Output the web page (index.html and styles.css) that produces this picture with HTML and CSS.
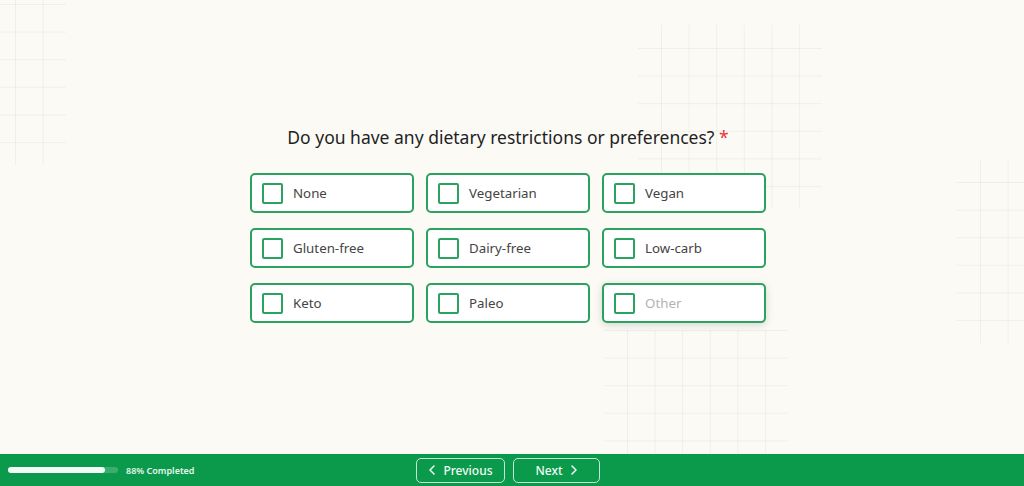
FILE: index.html
```html
<!DOCTYPE html>
<html lang="en">
<head>
  <meta charset="UTF-8">
  <meta name="viewport" content="width=device-width, initial-scale=1.0">
  <title>Survey</title>
  <link rel="stylesheet" href="styles.css">
</head>
<body>

  <!-- decorative grids in the background -->
  <div class="grid-deco deco-1"></div>
  <div class="grid-deco deco-2"></div>
  <div class="grid-deco deco-3"></div>
  <div class="grid-deco deco-4"></div>

  <div class="page">
    <main class="question">
      <h1 class="q-title">Do you have any dietary restrictions or preferences? <span class="req">*</span></h1>
      <ul class="choice-list">
        <li class="choice"><span class="box"></span><span class="choice-txt">None</span></li>
        <li class="choice"><span class="box"></span><span class="choice-txt">Vegetarian</span></li>
        <li class="choice"><span class="box"></span><span class="choice-txt">Vegan</span></li>
        <li class="choice"><span class="box"></span><span class="choice-txt">Gluten-free</span></li>
        <li class="choice"><span class="box"></span><span class="choice-txt">Dairy-free</span></li>
        <li class="choice"><span class="box"></span><span class="choice-txt">Low-carb</span></li>
        <li class="choice"><span class="box"></span><span class="choice-txt">Keto</span></li>
        <li class="choice"><span class="box"></span><span class="choice-txt">Paleo</span></li>
        <li class="choice other">
          <span class="box"></span>
          <input type="text" class="other-input" placeholder="Other">
        </li>
      </ul>
    </main>

    <footer class="bottom-bar">
      <div class="progress">
        <span class="progress-track"><span class="progress-fill" style="width: 88%"></span></span>
        <span class="progress-txt">88% Completed</span>
      </div>
      <div class="nav-btns">
        <button type="button" class="nav-btn">
          <svg width="8" height="10" viewBox="0 0 8 10"><path d="M6 1 2 5l4 4" fill="none" stroke="currentColor" stroke-width="1.5" stroke-linecap="round" stroke-linejoin="round"/></svg>
          Previous
        </button>
        <button type="button" class="nav-btn">
          Next
          <svg width="8" height="10" viewBox="0 0 8 10"><path d="M2 1l4 4-4 4" fill="none" stroke="currentColor" stroke-width="1.5" stroke-linecap="round" stroke-linejoin="round"/></svg>
        </button>
      </div>
    </footer>
  </div>

</body>
</html>
```

FILE: styles.css
```css
* {
  margin: 0;
  padding: 0;
  box-sizing: border-box;
}
ul, li {
  list-style-type: none;
}
button {
  cursor: pointer;
  border: 0;
  background: none;
  font-family: inherit;
}

body {
  width: 1024px;
  height: 486px;
  overflow: hidden;
  position: relative;
  background-color: #FBFAF5;
  font-family: "Noto Sans", "Open Sans", sans-serif;
  color: #222;
}

/* background grids */
.grid-deco {
  position: absolute;
  background-image:
    linear-gradient(to right, rgba(0,0,0,0.045) 1px, transparent 1px),
    linear-gradient(to bottom, rgba(0,0,0,0.045) 1px, transparent 1px);
  background-size: 27.6px 27.6px;
}
.deco-1 { left: 0;     top: 0;     width: 66px;  height: 165px; background-position: 15px 4px; }
.deco-2 { left: 638px; top: 25px;  width: 184px; height: 184px; background-position: 23px 23px; }
.deco-3 { left: 956px; top: 160px; width: 68px;  height: 183px; background-position: 24px 22px; }
.deco-4 { left: 604px; top: 330px; width: 184px; height: 124px; background-position: 23px 0; }

.page {
  position: relative;
  height: 100%;
  display: flex;
  flex-direction: column;
}

.question {
  flex: 1;
  display: flex;
  flex-direction: column;
  align-items: center;
  padding-top: 124px;
  padding-right: 8px;
}
.q-title {
  font-size: 17.5px;
  font-weight: 400;
  line-height: 26px;
  color: #1f1f1f;
}
.req {
  color: #e53935;
}

.choice-list {
  margin-top: 23px;
  display: grid;
  grid-template-columns: repeat(3, 164px);
  column-gap: 12px;
  row-gap: 15px;
}
.choice {
  height: 40px;
  display: flex;
  align-items: center;
  padding-left: 10px;
  background-color: #fff;
  border: 2px solid #2BA25F;
  border-radius: 5px;
}
.box {
  flex: none;
  width: 21px;
  height: 21px;
  border: 2px solid #2BA25F;
  border-radius: 2px;
  background-color: #fff;
}
.choice-txt {
  margin-left: 10px;
  font-size: 13.3px;
  color: #444;
}
.choice.other {
  box-shadow: 0 2px 8px rgba(0,0,0,0.15);
}
.other-input {
  margin-left: 10px;
  width: 110px;
  border: 0;
  outline: 0;
  font-family: inherit;
  font-size: 13.3px;
  color: #444;
  background: none;
}
.other-input::placeholder {
  color: #b3b3b3;
}

/* bottom bar */
.bottom-bar {
  height: 32px;
  background-color: #0B9A4B;
  display: flex;
  align-items: center;
  position: relative;
}
.progress {
  position: absolute;
  left: 8px;
  top: 0;
  height: 32px;
  display: flex;
  align-items: center;
}
.progress-track {
  display: block;
  width: 110px;
  height: 6px;
  border-radius: 3px;
  background-color: rgba(255,255,255,0.2);
}
.progress-fill {
  display: block;
  height: 100%;
  border-radius: 3px;
  background-color: #F2FBF6;
}
.progress-txt {
  margin-left: 8px;
  font-size: 9px;
  font-weight: 600;
  color: #E6F7EC;
}

.nav-btns {
  flex: 1;
  display: flex;
  justify-content: center;
  gap: 8px;
  padding-right: 8px;
}
.nav-btn {
  height: 25px;
  display: flex;
  align-items: center;
  justify-content: center;
  gap: 7px;
  border: 1px solid rgba(255,255,255,0.75);
  border-radius: 5px;
  color: #F2FBF6;
  font-size: 12px;
  font-weight: 500;
}
.nav-btn:first-child {
  width: 89px;
}
.nav-btn:last-child {
  width: 87px;
}
```
